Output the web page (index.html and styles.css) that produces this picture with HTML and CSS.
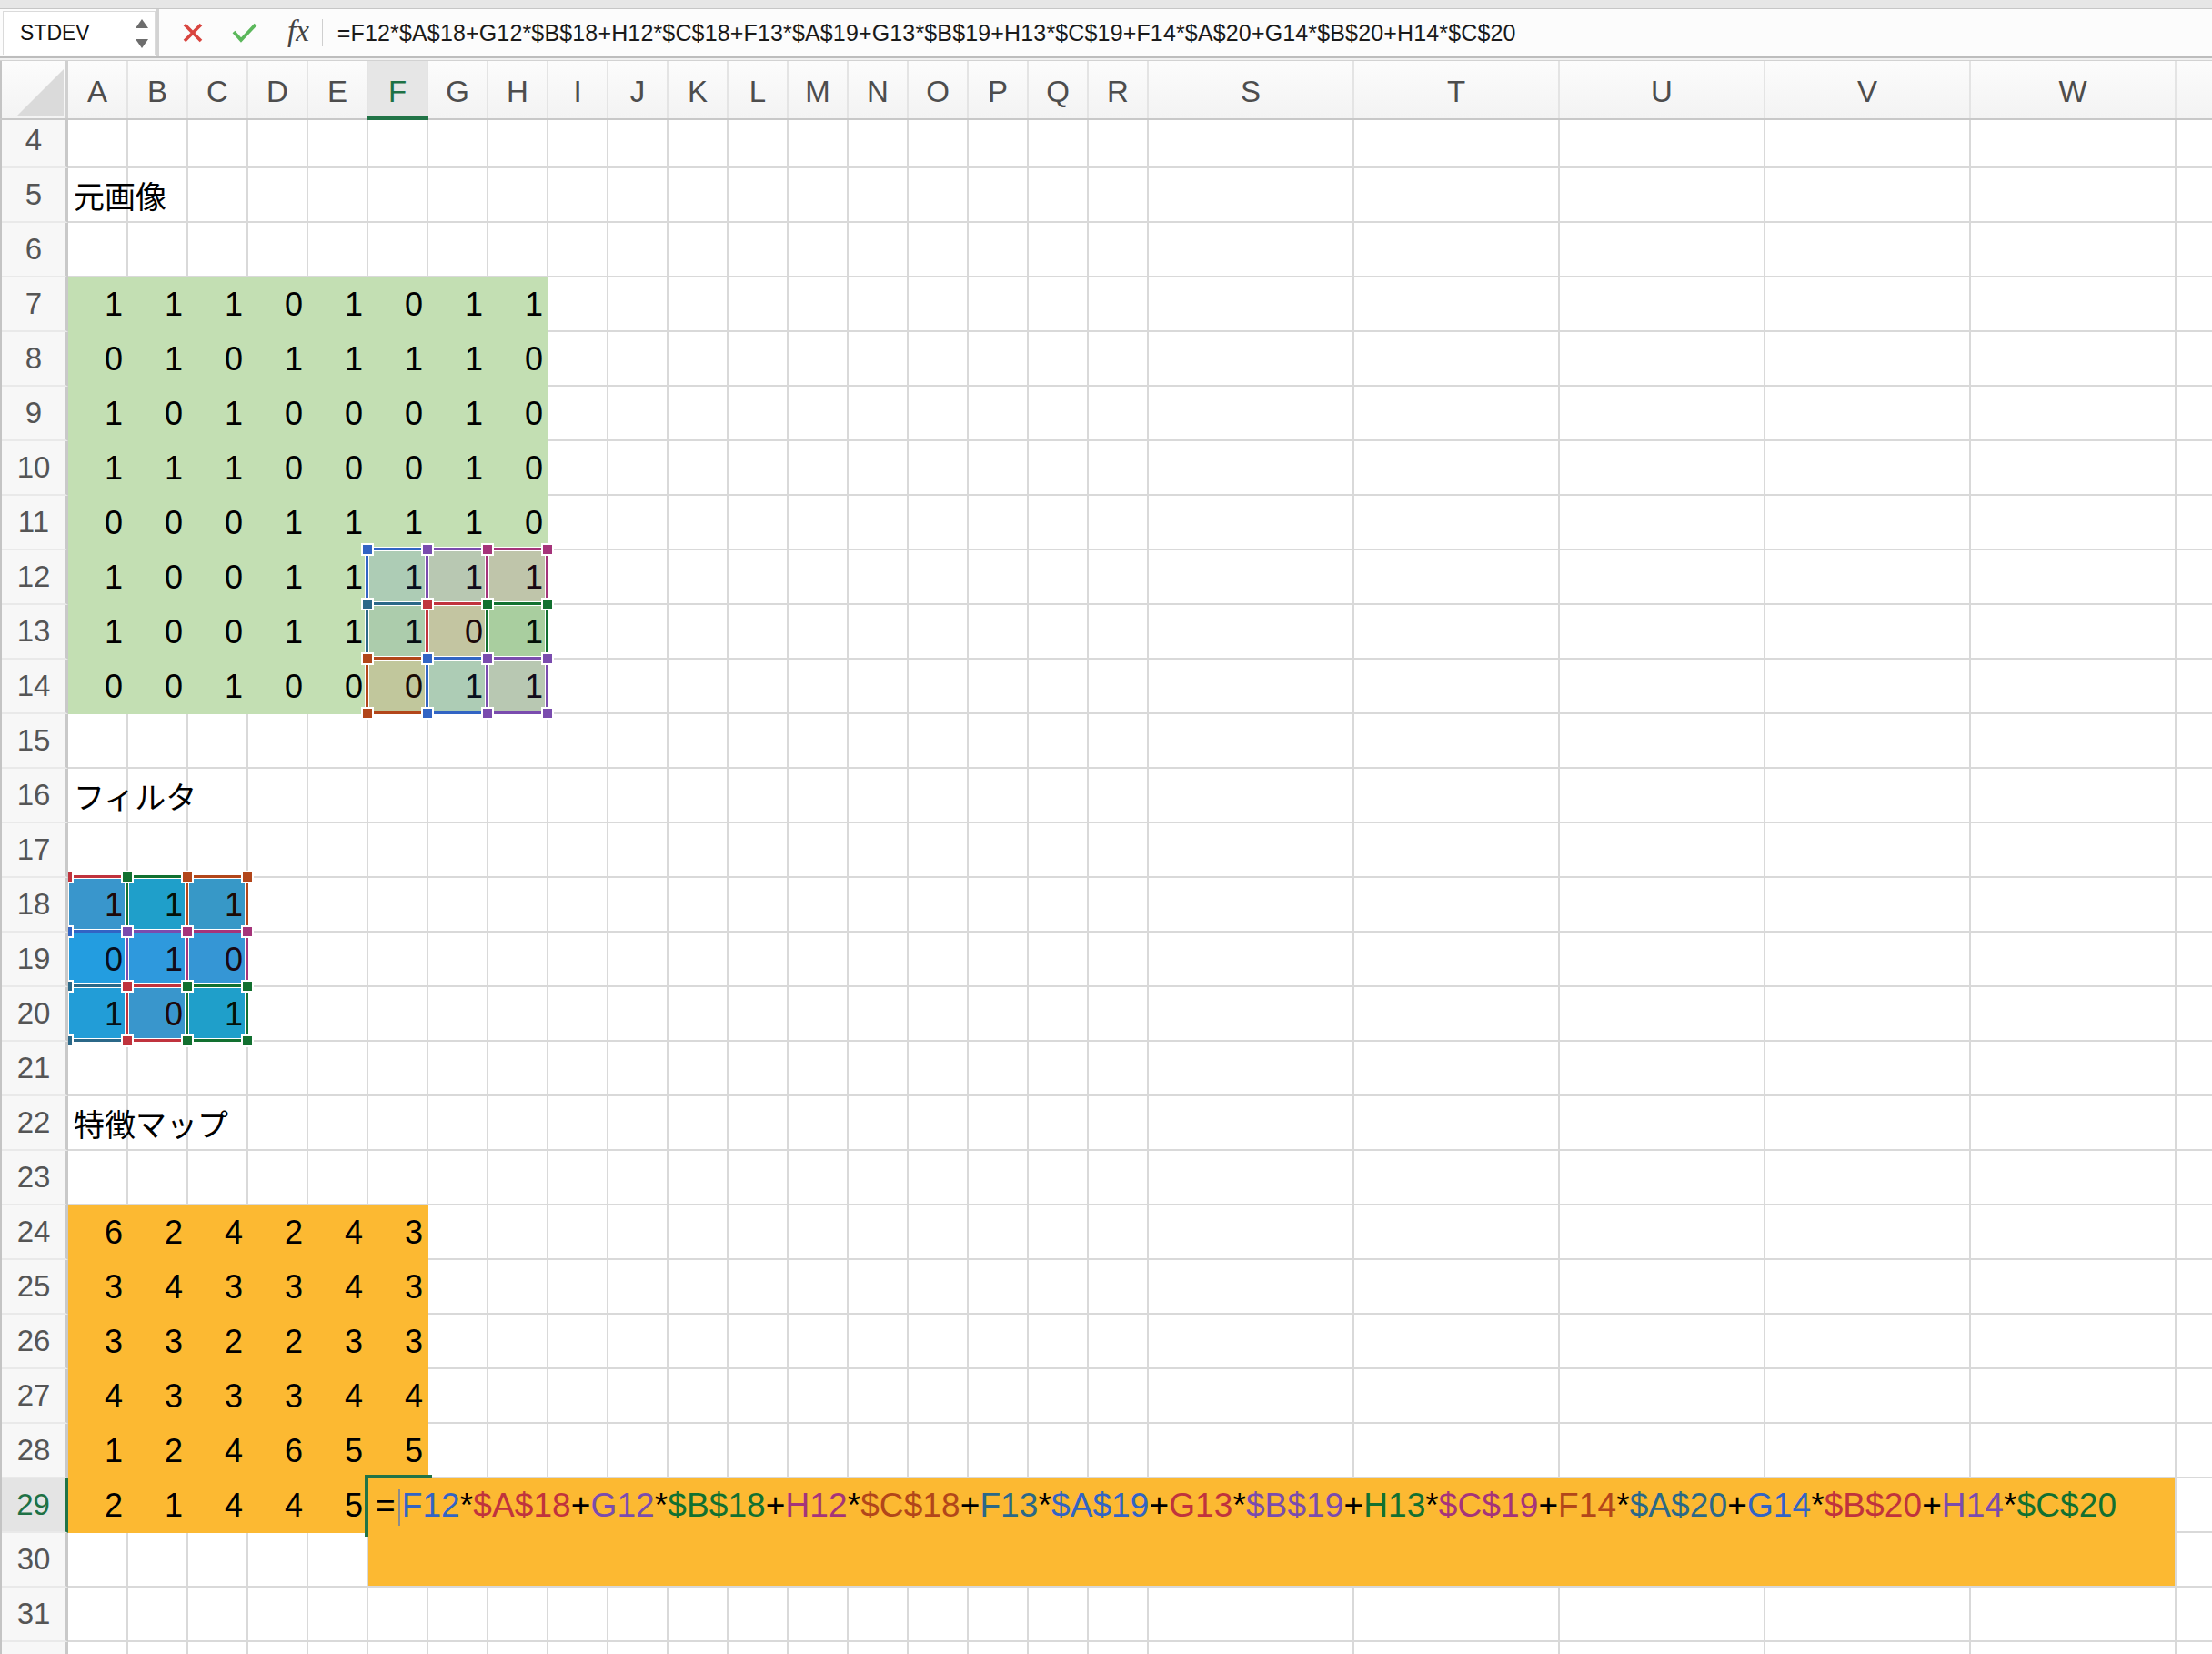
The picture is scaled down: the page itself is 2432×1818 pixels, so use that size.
FILE: index.html
```html
<!DOCTYPE html>
<html lang="ja">
<head>
<meta charset="utf-8">
<title>Excel</title>
<link rel="stylesheet" href="styles.css">
</head>
<body>
<div class="app">
  <div class="topstrip"></div>
  <div class="fbar">
    <div class="namebox">
      <div class="nb">
        <span>STDEV</span>
        <span class="spin"><i class="up"></i><i class="dn"></i></span>
      </div>
    </div>
    <svg class="ic-x" width="22" height="22" viewBox="0 0 22 22"><path d="M2 2 L20 20 M20 2 L2 20" fill="none" stroke="#d9453f" stroke-width="3.6"/></svg>
    <svg class="ic-ok" width="28" height="22" viewBox="0 0 28 22"><path d="M2 10 L10 19 L26 2" fill="none" stroke="#5cb85c" stroke-width="3.8"/></svg>
    <span class="fx">fx</span>
    <span class="fdiv"></span>
    <span class="ftext">=F12*$A$18+G12*$B$18+H12*$C$18+F13*$A$19+G13*$B$19+H13*$C$19+F14*$A$20+G14*$B$20+H14*$C$20</span>
  </div>
  <div class="fsep"></div>
  <div class="colhdr">
    <div class="corner"><span class="tri"></span></div>
    <div class="ch">A</div><div class="ch">B</div><div class="ch">C</div><div class="ch">D</div><div class="ch">E</div><div class="ch act">F</div><div class="ch">G</div><div class="ch">H</div><div class="ch">I</div><div class="ch">J</div><div class="ch">K</div><div class="ch">L</div><div class="ch">M</div><div class="ch">N</div><div class="ch">O</div><div class="ch">P</div><div class="ch">Q</div><div class="ch">R</div>
    <div class="ch w">S</div><div class="ch w">T</div><div class="ch w">U</div><div class="ch w">V</div><div class="ch w">W</div><div class="ch x"></div>
  </div>
  <div class="body">
    <div class="rowhdr">
      <div class="rh-inner">
        <div class="rh">4</div><div class="rh">5</div><div class="rh">6</div><div class="rh">7</div><div class="rh">8</div><div class="rh">9</div><div class="rh">10</div><div class="rh">11</div><div class="rh">12</div><div class="rh">13</div><div class="rh">14</div><div class="rh">15</div><div class="rh">16</div><div class="rh">17</div><div class="rh">18</div><div class="rh">19</div><div class="rh">20</div><div class="rh">21</div><div class="rh">22</div><div class="rh">23</div><div class="rh">24</div><div class="rh">25</div><div class="rh">26</div><div class="rh">27</div><div class="rh">28</div><div class="rh act">29</div><div class="rh">30</div><div class="rh">31</div><div class="rh"></div>
      </div>
    </div>
    <div class="sheetwrap">
      <div class="sheet">
        <div class="lbl l5">元画像</div>
        <div class="lbl l16">フィルタ</div>
        <div class="lbl l22">特徴マップ</div>

        <div class="blk img">
          <div class="v">1</div><div class="v">1</div><div class="v">1</div><div class="v">0</div><div class="v">1</div><div class="v">0</div><div class="v">1</div><div class="v">1</div>
          <div class="v">0</div><div class="v">1</div><div class="v">0</div><div class="v">1</div><div class="v">1</div><div class="v">1</div><div class="v">1</div><div class="v">0</div>
          <div class="v">1</div><div class="v">0</div><div class="v">1</div><div class="v">0</div><div class="v">0</div><div class="v">0</div><div class="v">1</div><div class="v">0</div>
          <div class="v">1</div><div class="v">1</div><div class="v">1</div><div class="v">0</div><div class="v">0</div><div class="v">0</div><div class="v">1</div><div class="v">0</div>
          <div class="v">0</div><div class="v">0</div><div class="v">0</div><div class="v">1</div><div class="v">1</div><div class="v">1</div><div class="v">1</div><div class="v">0</div>
          <div class="v">1</div><div class="v">0</div><div class="v">0</div><div class="v">1</div><div class="v">1</div><div class="v">1</div><div class="v">1</div><div class="v">1</div>
          <div class="v">1</div><div class="v">0</div><div class="v">0</div><div class="v">1</div><div class="v">1</div><div class="v">1</div><div class="v">0</div><div class="v">1</div>
          <div class="v">0</div><div class="v">0</div><div class="v">1</div><div class="v">0</div><div class="v">0</div><div class="v">0</div><div class="v">1</div><div class="v">1</div>
        </div>

        <div class="blk flt">
          <div class="v">1</div><div class="v">1</div><div class="v">1</div>
          <div class="v">0</div><div class="v">1</div><div class="v">0</div>
          <div class="v">1</div><div class="v">0</div><div class="v">1</div>
        </div>

        <div class="blk map">
          <div class="v">6</div><div class="v">2</div><div class="v">4</div><div class="v">2</div><div class="v">4</div><div class="v">3</div>
          <div class="v">3</div><div class="v">4</div><div class="v">3</div><div class="v">3</div><div class="v">4</div><div class="v">3</div>
          <div class="v">3</div><div class="v">3</div><div class="v">2</div><div class="v">2</div><div class="v">3</div><div class="v">3</div>
          <div class="v">4</div><div class="v">3</div><div class="v">3</div><div class="v">3</div><div class="v">4</div><div class="v">4</div>
          <div class="v">1</div><div class="v">2</div><div class="v">4</div><div class="v">6</div><div class="v">5</div><div class="v">5</div>
          <div class="v">2</div><div class="v">1</div><div class="v">4</div><div class="v">4</div><div class="v">5</div><div class="v"></div>
        </div>

        <div class="ref blue cF y12"><i class="tl"></i><i class="tr"></i><i class="bl"></i><i class="br"></i></div>
        <div class="ref red cA y18"><i class="tl"></i><i class="tr"></i><i class="bl"></i><i class="br"></i></div>
        <div class="ref purple cG y12"><i class="tl"></i><i class="tr"></i><i class="bl"></i><i class="br"></i></div>
        <div class="ref green cB y18"><i class="tl"></i><i class="tr"></i><i class="bl"></i><i class="br"></i></div>
        <div class="ref magenta cH y12"><i class="tl"></i><i class="tr"></i><i class="bl"></i><i class="br"></i></div>
        <div class="ref orange cC y18"><i class="tl"></i><i class="tr"></i><i class="bl"></i><i class="br"></i></div>
        <div class="ref teal cF y13"><i class="tl"></i><i class="tr"></i><i class="bl"></i><i class="br"></i></div>
        <div class="ref blue cA y19"><i class="tl"></i><i class="tr"></i><i class="bl"></i><i class="br"></i></div>
        <div class="ref red cG y13"><i class="tl"></i><i class="tr"></i><i class="bl"></i><i class="br"></i></div>
        <div class="ref purple cB y19"><i class="tl"></i><i class="tr"></i><i class="bl"></i><i class="br"></i></div>
        <div class="ref green cH y13"><i class="tl"></i><i class="tr"></i><i class="bl"></i><i class="br"></i></div>
        <div class="ref magenta cC y19"><i class="tl"></i><i class="tr"></i><i class="bl"></i><i class="br"></i></div>
        <div class="ref orange cF y14"><i class="tl"></i><i class="tr"></i><i class="bl"></i><i class="br"></i></div>
        <div class="ref teal cA y20"><i class="tl"></i><i class="tr"></i><i class="bl"></i><i class="br"></i></div>
        <div class="ref blue cG y14"><i class="tl"></i><i class="tr"></i><i class="bl"></i><i class="br"></i></div>
        <div class="ref red cB y20"><i class="tl"></i><i class="tr"></i><i class="bl"></i><i class="br"></i></div>
        <div class="ref purple cH y14"><i class="tl"></i><i class="tr"></i><i class="bl"></i><i class="br"></i></div>
        <div class="ref green cC y20"><i class="tl"></i><i class="tr"></i><i class="bl"></i><i class="br"></i></div>

        <div class="active"></div>
        <div class="edit">=<span class="caret"></span><span class="t-blue">F12</span>*<span class="t-red">$A$18</span>+<span class="t-purple">G12</span>*<span class="t-green">$B$18</span>+<span class="t-magenta">H12</span>*<span class="t-orange">$C$18</span>+<span class="t-teal">F13</span>*<span class="t-blue">$A$19</span>+<span class="t-red">G13</span>*<span class="t-purple">$B$19</span>+<span class="t-green">H13</span>*<span class="t-magenta">$C$19</span>+<span class="t-orange">F14</span>*<span class="t-teal">$A$20</span>+<span class="t-blue">G14</span>*<span class="t-red">$B$20</span>+<span class="t-purple">H14</span>*<span class="t-green">$C$20</span></div>
      </div>
    </div>
  </div>
</div>
</body>
</html>
```

FILE: styles.css
```css
* { box-sizing: border-box; }
html, body { margin: 0; padding: 0; }
body {
  width: 2432px;
  height: 1818px;
  overflow: hidden;
  background: #fff;
  font-family: "Liberation Sans", Arial, sans-serif;
  color: #000;
}

/* ---------- top strip & formula bar ---------- */
.topstrip {
  height: 10px;
  background: #e6e6e6;
  border-bottom: 1px solid #c6c6c6;
}
.fbar {
  display: flex;
  align-items: center;
  height: 52px;
  background: #fcfcfc;
}
.namebox {
  align-self: stretch;
  width: 175px;
  flex: none;
  padding: 2px 1px 1px 3px;
  border-right: 3px solid #d3d3d3;
  display: flex;
}
.nb {
  flex: 1;
  background: #fff;
  border: 1px solid #dadada;
  display: flex;
  align-items: center;
  justify-content: space-between;
  padding: 0 7px 0 18px;
  font-size: 23px;
  color: #111;
}
.spin {
  display: flex;
  flex-direction: column;
  gap: 12px;
}
.spin i {
  display: block;
  width: 0;
  height: 0;
  border-left: 7px solid transparent;
  border-right: 7px solid transparent;
}
.spin .up { border-bottom: 10px solid #6d6d6d; }
.spin .dn { border-top: 10px solid #6d6d6d; }

.ic-x { margin-left: 26px; flex: none; }
.ic-ok { margin-left: 32px; flex: none; }
.fx {
  margin-left: 33px;
  font-family: "Liberation Serif", "Times New Roman", serif;
  font-style: italic;
  font-size: 33px;
  color: #444;
  line-height: 1;
  margin-top: -4px;
}
.fdiv {
  margin-left: 14px;
  width: 1px;
  height: 30px;
  background: #cfcfcf;
}
.ftext {
  margin-left: 16px;
  font-size: 25px;
  letter-spacing: 0.15px;
  color: #1a1a1a;
  white-space: nowrap;
}
.fsep {
  height: 5px;
  border-top: 2px solid #bdbdbd;
  border-bottom: 1px solid #d2d2d2;
  background: #f1f1f1;
}

/* ---------- column header ---------- */
.colhdr {
  display: flex;
  height: 65px;
  background: linear-gradient(#fcfcfc, #f3f3f3);
  border-bottom: 2px solid #c8c8c8;
}
.corner {
  width: 75px;
  flex: none;
  position: relative;
  border-left: 2px solid #c4c4c4;
  border-right: 3px solid #d0d0d0;
}
.tri {
  position: absolute;
  left: 16px;
  top: 9px;
  width: 52px;
  height: 52px;
  background: #dadada;
  clip-path: polygon(100% 0, 100% 100%, 0 100%);
}
.ch {
  width: 66px;
  flex: none;
  position: relative;
  display: flex;
  align-items: center;
  justify-content: center;
  padding-top: 5px;
  border-right: 2px solid #e4e4e4;
  font-size: 33px;
  color: #4d4d4d;
}
.ch.w { width: 226px; }
.ch.x { flex: 1; border-right: none; }
.ch.act {
  background: #e6e6e6;
  color: #1e7145;
}
.ch.act::after {
  content: "";
  position: absolute;
  left: -2px;
  right: -2px;
  bottom: -2px;
  height: 4px;
  background: #217346;
}

/* ---------- body ---------- */
.body {
  display: flex;
  height: 1686px;
  overflow: hidden;
}
.rowhdr {
  width: 75px;
  flex: none;
  overflow: hidden;
  background: #f7f7f7;
  border-left: 2px solid #c4c4c4;
}
.rh-inner { margin-top: -7px; }
.rh {
  height: 60px;
  display: flex;
  align-items: center;
  justify-content: center;
  border-bottom: 2px solid #e9e9e9;
  border-right: 3px solid #c9c9c9;
  font-size: 33px;
  color: #555;
}
.rh.act {
  background: #e4e4e4;
  color: #1e7145;
  border-right: 4px solid #217346;
}

.sheetwrap {
  flex: 1;
  overflow: hidden;
}
.sheet {
  position: relative;
  margin-top: -7px;
  display: grid;
  grid-template-columns: repeat(18, 66px) repeat(5, 226px) 1fr;
  grid-template-rows: repeat(29, 60px);
  background:
    repeating-linear-gradient(to bottom, transparent 0 58px, #d9d9d9 58px 60px),
    repeating-linear-gradient(to right, transparent 0 64px, #d9d9d9 64px 66px) 0 0 / 1188px 100% no-repeat,
    repeating-linear-gradient(to right, transparent 0 224px, #d9d9d9 224px 226px) 1188px 0 / 1130px 100% no-repeat,
    #fff;
}

.lbl {
  grid-column: 1 / span 5;
  font-family: "Noto Sans CJK JP", "Noto Sans CJK SC", sans-serif;
  font-size: 34px;
  line-height: 60px;
  padding-left: 6px;
  white-space: nowrap;
}
.l5 { grid-row: 2; }
.l16 { grid-row: 13; }
.l22 { grid-row: 19; }

.blk {
  display: grid;
  grid-auto-rows: 60px;
}
.img {
  grid-column: 1 / span 8;
  grid-row: 4 / span 8;
  grid-template-columns: repeat(8, 66px);
  background: #c3dfb3;
}
.flt {
  grid-column: 1 / span 3;
  grid-row: 15 / span 3;
  grid-template-columns: repeat(3, 66px);
  background: #22a7e5;
}
.map {
  grid-column: 1 / span 6;
  grid-row: 21 / span 6;
  grid-template-columns: repeat(6, 66px);
  background: #fcb932;
}
.v {
  text-align: right;
  padding-right: 6px;
  font-size: 36px;
  line-height: 60px;
  color: #000;
}

/* ---------- formula reference boxes ---------- */
.ref {
  position: absolute;
  width: 69px;
  height: 63px;
  border: 3px solid currentColor;
  box-shadow: 0 0 0 1px #fff, inset 0 0 0 1px #fff;
}
.ref i {
  position: absolute;
  width: 14px;
  height: 14px;
  background: currentColor;
  border: 2px solid #fff;
}
.ref .tl { left: -8.5px; top: -8.5px; }
.ref .tr { right: -8.5px; top: -8.5px; }
.ref .bl { left: -8.5px; bottom: -8.5px; }
.ref .br { right: -8.5px; bottom: -8.5px; }

.cA { left: -3px; }
.cB { left: 63px; }
.cC { left: 129px; }
.cF { left: 327px; }
.cG { left: 393px; }
.cH { left: 459px; }
.y12 { top: 477px; }
.y13 { top: 537px; }
.y14 { top: 597px; }
.y18 { top: 837px; }
.y19 { top: 897px; }
.y20 { top: 957px; }

.blue { color: #3264c4; background: rgba(50, 100, 196, 0.15); }
.red { color: #c0333d; background: rgba(192, 51, 61, 0.15); }
.purple { color: #7a4cae; background: rgba(122, 76, 174, 0.15); }
.green { color: #127030; background: rgba(18, 112, 48, 0.15); }
.magenta { color: #a5347a; background: rgba(165, 52, 122, 0.15); }
.orange { color: #b2461a; background: rgba(178, 70, 26, 0.15); }
.teal { color: #2b6888; background: rgba(43, 104, 136, 0.15); }

/* ---------- active cell & in-cell editor ---------- */
.active {
  position: absolute;
  left: 326px;
  top: 1496px;
  width: 74px;
  height: 68px;
  border: 4px solid #217346;
}
.edit {
  position: absolute;
  left: 330px;
  top: 1500px;
  width: 1986px;
  height: 118px;
  background: #fcb932;
  padding-left: 8px;
  font-size: 37px;
  letter-spacing: 0.1px;
  line-height: 60px;
  white-space: nowrap;
  color: #000;
}
.caret {
  display: inline-block;
  width: 2px;
  height: 40px;
  margin: 0 2px 0 3px;
  background: #8c8c8c;
  vertical-align: middle;
}
.t-blue { color: #3264c4; }
.t-red { color: #c0333d; }
.t-purple { color: #7a4cae; }
.t-green { color: #127030; }
.t-magenta { color: #a5347a; }
.t-orange { color: #b2461a; }
.t-teal { color: #2b6888; }
```
